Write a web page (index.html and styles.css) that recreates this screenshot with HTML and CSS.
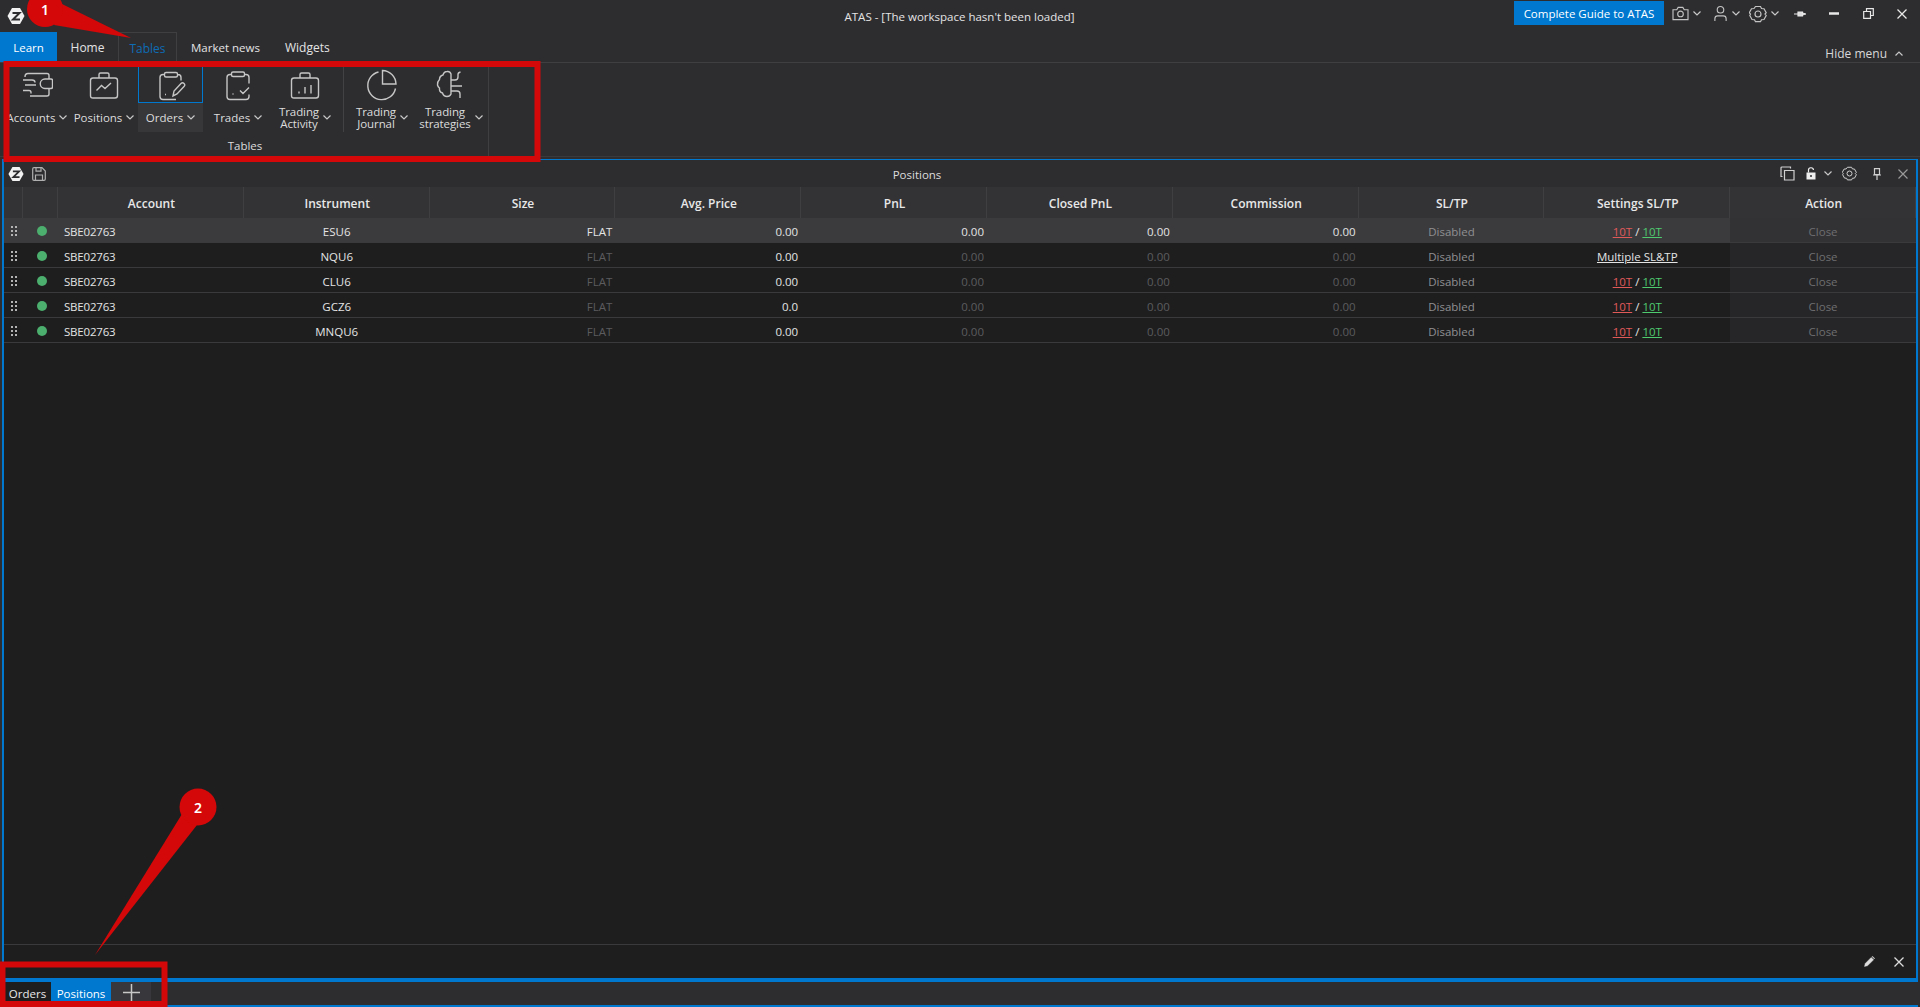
FILE: index.html
```html
<!DOCTYPE html>
<html lang="en">
<head>
  <meta charset="UTF-8" />
  <title>ATAS</title>
  <link rel="stylesheet" href="styles.css">
</head>
<body>
<div class="app">

  <!-- Title bar -->
  <div class="titlebar">
    <svg class="logo" viewBox="0 0 18 18"><path d="M5 1h8l4.500 8-4.500 8H5L.5 9z" fill="#f2f2f2"/><path d="M5.500 6h7L6 12.500h7" fill="none" stroke="#2d2d30" stroke-width="2"/></svg>
    <div class="app-title">ATAS - [The workspace hasn't been loaded]</div>
    <div class="guide-btn">Complete Guide to ATAS</div>
    <div class="sys-icons">
      <svg class="sys sys-camera" viewBox="0 0 18 16"><path d="M1 4h4l1.500-2.500h5L13 4h4v10.500H1z M6 8.500a3 3 0 1 0 6 0a3 3 0 1 0-6 0"/></svg>
      <svg class="chev chev-sys" viewBox="0 0 8 5"><path d="M.5.5 4 4 7.500.5"/></svg>
      <svg class="sys sys-user" viewBox="0 0 16 17"><path d="M4.500 4.500a3.500 3.500 0 1 0 7 0a3.500 3.500 0 1 0-7 0 M2 16.500v-2.500q0-3 3-3h6q3 0 3 3v2.500"/></svg>
      <svg class="chev chev-sys" viewBox="0 0 8 5"><path d="M.5.5 4 4 7.500.5"/></svg>
      <svg class="sys sys-gear" viewBox="0 0 18 18"><path d="M6.500 1.500h5l1 2 2.500.2 2.200 4-1.200 1.300 1.200 1.500-2.200 4-2.500.2-1 2h-5l-1-2-2.500-.2-2.200-4L1.500 9 .3 7.700l2.200-4 2.500-.2z M6 9a3 3 0 1 0 6 0a3 3 0 1 0-6 0"/></svg>
      <svg class="chev chev-sys" viewBox="0 0 8 5"><path d="M.5.5 4 4 7.500.5"/></svg>
      <svg class="win win-pin" viewBox="0 0 12 8"><path d="M0 4h4M4 2h4.500v4H4zM8.500 3l3.500 1-3.500 1" fill="#ddd"/></svg>
      <svg class="win win-min" viewBox="0 0 10 3"><path d="M0 1.500h10" stroke-width="2.500"/></svg>
      <svg class="win win-restore" viewBox="0 0 11 11"><path d="M.7 3.500h6.800v6.800H.7zM3.500 3.500V.7h6.800v6.800H7.500"/></svg>
      <svg class="win win-close" viewBox="0 0 10 10"><path d="M.5.5l9 9M9.500.5l-9 9" stroke-width="1.300"/></svg>
    </div>
  </div>

  <!-- Menu tabs -->
  <div class="menu">
    <div class="menu-tab menu-learn">Learn</div>
    <div class="menu-tab menu-home">Home</div>
    <div class="menu-tab menu-tables">Tables</div>
    <div class="menu-tab menu-news">Market news</div>
    <div class="menu-tab menu-widgets">Widgets</div>
    <div class="hide-menu">Hide menu
      <svg class="chev hide-chev" viewBox="0 0 8 5"><path d="M.5 4.500 4 1l3.500 3.500"/></svg>
    </div>
  </div>

  <!-- Ribbon -->
  <div class="ribbon">
    <div class="ribbon-group">
      <div class="ribbon-items">
        <div class="rb-item rb-accounts">
          <div class="rb-icon">
            <svg viewBox="0 0 32 32"><path d="M7 4.500h19q2 0 2 2v3.500M28 19.500v5.500q0 2-2 2H9M2 11h9q3 0 3 2.500M4 16h11M2 21.500h6q2 0 2 2v1M7 4.500q-3 0-3 3.500M24 10h6q1.500 0 1.500 1.500v6.500q0 1.500-1.500 1.500h-6a4.700 4.700 0 0 1 0-9.500z"/></svg>
          </div>
          <div class="rb-label"><span>Accounts</span><svg class="chev" viewBox="0 0 8 5"><path d="M.5.5 4 4 7.500.5"/></svg></div>
        </div>
        <div class="rb-item rb-positions">
          <div class="rb-icon">
            <svg viewBox="0 0 32 32"><path d="M5 9h22q2.500 0 2.500 2.500v15q0 2.500-2.500 2.500H5q-2.500 0-2.500-2.500v-15Q2.500 9 5 9zM11 9V5.500q0-1.500 1.500-1.500h7q1.500 0 1.500 1.500V9M8.500 21.500l5-5 3.500 3 6-5.500"/></svg>
          </div>
          <div class="rb-label"><span>Positions</span><svg class="chev" viewBox="0 0 8 5"><path d="M.5.5 4 4 7.500.5"/></svg></div>
        </div>
        <div class="rb-item rb-orders">
          <div class="rb-icon">
            <svg viewBox="0 0 32 32"><path d="M10 5.500H8Q5 5.500 5 8.500v19q0 3 3 3h13M22 5.500h1q3 0 3 3v3M11 3.500h10q1.500 0 1.500 1.500v1.500q0 1.500-1.500 1.500H11q-1.500 0-1.500-1.500V5q0-1.500 1.500-1.500zM10 25.500h1M18 27l1-5 7-7.500q1.500-1.500 3 0t0 3L22 25z"/></svg>
          </div>
          <div class="rb-label"><span>Orders</span><svg class="chev" viewBox="0 0 8 5"><path d="M.5.5 4 4 7.500.5"/></svg></div>
        </div>
        <div class="rb-item rb-trades">
          <div class="rb-icon">
            <svg viewBox="0 0 32 32"><path d="M9 5.500H8Q5 5.500 5 8.500v19q0 3 3 3h16q3 0 3-3v-2M23 5.500h1q3 0 3 3v6M11 3h10q1.500 0 1.500 1.500v1.500q0 1.500-1.500 1.500H11q-1.500 0-1.500-1.500V4.500Q9.500 3 11 3zM10.500 25h1M18 21.500l3 3 6-6"/></svg>
          </div>
          <div class="rb-label"><span>Trades</span><svg class="chev" viewBox="0 0 8 5"><path d="M.5.500 4 4 7.500.5"/></svg></div>
        </div>
        <div class="rb-item rb-activity">
          <div class="rb-icon">
            <svg viewBox="0 0 32 32"><path d="M5 9h22q2.500 0 2.500 2.500v15q0 2.500-2.500 2.500H5q-2.500 0-2.500-2.500v-15Q2.500 9 5 9zM11 9V5.500Q11 4 12.500 4h7Q21 4 21 5.500V9M10 22.500v2M16 18v6.500M22 16v8.500"/></svg>
          </div>
          <div class="rb-label rb-two"><span>Trading<br>Activity</span><svg class="chev" viewBox="0 0 8 5"><path d="M.5.5 4 4 7.500.5"/></svg></div>
        </div>
        <div class="rb-sep"></div>
        <div class="rb-item rb-journal">
          <div class="rb-icon">
            <svg viewBox="0 0 32 32"><path d="M12.500 3A14 14 0 1 0 29.500 19.500M16.500 1.500V15H30A14 14 0 0 0 16.500 1.500z"/></svg>
          </div>
          <div class="rb-label rb-two"><span>Trading<br>Journal</span><svg class="chev" viewBox="0 0 8 5"><path d="M.5.5 4 4 7.500.5"/></svg></div>
        </div>
        <div class="rb-item rb-strategies">
          <div class="rb-icon">
            <svg viewBox="0 0 32 32"><path d="M16 5q-1-3-4-2.500-3 0-4 3.500-3.500 1-3.500 4.500Q2 13 2.500 16q.5 2 2 3-.5 4 3 5 1 3.500 4.500 3.500 3 0 4-2.500zM16 11h4q3 0 3-3V5.500q0-2 2.500-2.500M16 17h11M16 22h6q3 0 3 3v4"/></svg>
          </div>
          <div class="rb-label rb-two"><span>Trading<br>strategies</span><svg class="chev" viewBox="0 0 8 5"><path d="M.5.5 4 4 7.500.5"/></svg></div>
        </div>
      </div>
      <div class="group-name">Tables</div>
    </div>
  </div>

  <!-- Positions panel -->
  <div class="panel">
    <div class="panel-bar">
      <svg class="logo logo-panel" viewBox="0 0 18 18"><path d="M5 1h8l4.500 8-4.500 8H5L.5 9z" fill="#f2f2f2"/><path d="M5.500 6h7L6 12.500h7" fill="none" stroke="#2d2d30" stroke-width="2"/></svg>
      <svg class="bar-save" viewBox="0 0 14 14"><path d="M2 .7h8l3.300 3.300v8q0 1.300-1.300 1.300H2Q.7 13.300.7 12V2Q.7.700 2 .7zM4 .7v3.500h5V.7M3.500 13.300V8h7v5.300"/></svg>
      <div class="panel-title">Positions</div>
      <div class="bar-icons">
        <svg class="bi bi-copy" viewBox="0 0 15 15"><path d="M4.500 4.500h9.500v9.500H4.500zM2.500 10.500H1V2q0-1 1-1h8.500v1.500"/></svg>
        <svg class="bi bi-lock" viewBox="0 0 10 13"><path d="M2.500 5.500V3.500a2.500 2.500 0 0 1 5-.5" fill="none"/><path d="M.5 5.500h9v7h-9z" fill="#eee" stroke="none"/><path d="M5 8v2" stroke="#2d2d30" stroke-width="1.500"/></svg>
        <svg class="chev bi-chev" viewBox="0 0 8 5"><path d="M.5.5 4 4 7.500.5"/></svg>
        <svg class="bi bi-gear" viewBox="0 0 18 18"><path d="M6.500 1.500h5l1 2 2.500.2 2.200 4-1.200 1.300 1.200 1.500-2.200 4-2.500.2-1 2h-5l-1-2-2.500-.2-2.200-4L1.500 9 .3 7.700l2.200-4 2.500-.2z M6 9a3 3 0 1 0 6 0a3 3 0 1 0-6 0"/></svg>
        <svg class="bi bi-pin" viewBox="0 0 8 12"><path d="M1.500.7h5v6h-5zM0 7h8M4 7v5"/></svg>
        <svg class="bi bi-close" viewBox="0 0 10 10"><path d="M.5.5l9 9M9.500.5l-9 9"/></svg>
      </div>
    </div>

    <div class="table">
      <div class="row head">
        <div class="cell"></div><div class="cell"></div>
        <div class="cell c">Account</div><div class="cell c">Instrument</div><div class="cell c">Size</div>
        <div class="cell c">Avg. Price</div><div class="cell c">PnL</div><div class="cell c">Closed PnL</div>
        <div class="cell c">Commission</div><div class="cell c">SL/TP</div><div class="cell c">Settings SL/TP</div><div class="cell c">Action</div>
      </div>

      <div class="row sel">
        <div class="cell grip"><i></i></div><div class="cell"><b class="status"></b></div>
        <div class="cell acct">SBE02763</div><div class="cell c">ESU6</div><div class="cell r">FLAT</div>
        <div class="cell r">0.00</div><div class="cell r">0.00</div><div class="cell r">0.00</div><div class="cell r">0.00</div>
        <div class="cell c mid">Disabled</div>
        <div class="cell c"><u class="sl">10T</u>&nbsp;/&nbsp;<u class="tp">10T</u></div>
        <div class="cell c action">Close</div>
      </div>
      <div class="row">
        <div class="cell grip"><i></i></div><div class="cell"><b class="status"></b></div>
        <div class="cell acct">SBE02763</div><div class="cell c">NQU6</div><div class="cell r dim">FLAT</div>
        <div class="cell r">0.00</div><div class="cell r dim">0.00</div><div class="cell r dim">0.00</div><div class="cell r dim">0.00</div>
        <div class="cell c mid">Disabled</div>
        <div class="cell c"><u>Multiple SL&amp;TP</u></div>
        <div class="cell c action">Close</div>
      </div>
      <div class="row">
        <div class="cell grip"><i></i></div><div class="cell"><b class="status"></b></div>
        <div class="cell acct">SBE02763</div><div class="cell c">CLU6</div><div class="cell r dim">FLAT</div>
        <div class="cell r">0.00</div><div class="cell r dim">0.00</div><div class="cell r dim">0.00</div><div class="cell r dim">0.00</div>
        <div class="cell c mid">Disabled</div>
        <div class="cell c"><u class="sl">10T</u>&nbsp;/&nbsp;<u class="tp">10T</u></div>
        <div class="cell c action">Close</div>
      </div>
      <div class="row">
        <div class="cell grip"><i></i></div><div class="cell"><b class="status"></b></div>
        <div class="cell acct">SBE02763</div><div class="cell c">GCZ6</div><div class="cell r dim">FLAT</div>
        <div class="cell r">0.0</div><div class="cell r dim">0.00</div><div class="cell r dim">0.00</div><div class="cell r dim">0.00</div>
        <div class="cell c mid">Disabled</div>
        <div class="cell c"><u class="sl">10T</u>&nbsp;/&nbsp;<u class="tp">10T</u></div>
        <div class="cell c action">Close</div>
      </div>
      <div class="row">
        <div class="cell grip"><i></i></div><div class="cell"><b class="status"></b></div>
        <div class="cell acct">SBE02763</div><div class="cell c">MNQU6</div><div class="cell r dim">FLAT</div>
        <div class="cell r">0.00</div><div class="cell r dim">0.00</div><div class="cell r dim">0.00</div><div class="cell r dim">0.00</div>
        <div class="cell c mid">Disabled</div>
        <div class="cell c"><u class="sl">10T</u>&nbsp;/&nbsp;<u class="tp">10T</u></div>
        <div class="cell c action">Close</div>
      </div>
    </div>

    <div class="panel-foot">
      <svg class="foot-icon" viewBox="0 0 12 12"><path d="M.5 11.500l.8-3.300 6.500-6.700 2.700 2.700-6.700 6.500z" fill="#ddd"/><path d="M8.700.7l.6-.4 2.400 2.400-.4.6z" fill="#ddd"/></svg>
      <svg class="foot-icon foot-close" viewBox="0 0 10 10"><path d="M.5.5l9 9M9.500.5l-9 9" stroke-width="1.300"/></svg>
    </div>
  </div>

  <!-- Workspace tabs -->
  <div class="tabbar">
    <div class="ws-tab">Orders</div>
    <div class="ws-tab ws-active">Positions</div>
    <div class="ws-add"><svg viewBox="0 0 17 17"><path d="M8.500 0v17M0 8.500h17" stroke-width="1.500"/></svg></div>
  </div>

</div>

<!-- Red annotations drawn over the screenshot -->
<svg class="marks" viewBox="0 0 1920 1007">
  <path class="mark-box" d="M6.500 64H537.500V159H6.500z"/>
  <path class="mark-box" d="M2.500 964.500H164.500V1004H2.500z"/>
  <path class="mark-fill" d="M62 4 131 38 54 25z"/>
  <circle class="mark-fill" cx="45" cy="9" r="18"/>
  <path class="mark-fill" d="M182 814 95 955 197 825z"/>
  <circle class="mark-fill" cx="198" cy="807" r="18.500"/>
  <text class="mark-num" x="45" y="15">1</text>
  <text class="mark-num" x="198" y="813">2</text>
</svg>
</body>
</html>
```

FILE: styles.css
```css
* {
  box-sizing: border-box;
}
html, body {
  margin: 0;
  height: 100%;
  overflow: hidden;
}
body {
  font-family: 'Open Sans', 'Noto Sans', sans-serif;
  font-size: 11.5px;
  color: #e4e4e4;
  background-color: #2d2d30;
}
svg {
  display: block;
  flex: none;
  fill: none;
  stroke: #d0d0d0;
  stroke-width: 1.2;
}
.app {
  height: 1007px;
  display: flex;
  flex-direction: column;
}

/* title bar */
.titlebar {
  height: 32px;
  display: flex;
  align-items: center;
  padding-left: 7px;
  position: relative;
}
.logo {
  width: 18px;
  height: 18px;
  stroke: none;
}
.app-title {
  flex: 1;
  text-align: center;
  padding-left: 380px;
  padding-top: 1px;
}
.guide-btn {
  width: 150px;
  height: 24px;
  margin-top: -6px;
  background-color: #0078cf;
  color: #fff;
  text-align: center;
  line-height: 25px;
  font-size: 11.5px;
}
.sys-icons {
  width: 256px;
  display: flex;
  align-items: center;
  margin-top: -5px;
  padding-left: 8px;
}
.sys {
  stroke: #c4c4c4;
}
.sys-camera {
  width: 17px;
  height: 15px;
}
.sys-user {
  width: 15px;
  height: 17px;
  margin-left: 12px;
}
.sys-gear {
  width: 18px;
  height: 18px;
  margin-left: 9px;
}
.chev {
  width: 8px;
  height: 5px;
  stroke: #c8c8c8;
  stroke-width: 1.2;
}
.chev-sys {
  margin-left: 4px;
}
.win {
  stroke: #e8e8e8;
}
.win-pin {
  width: 12px;
  height: 8px;
  margin-left: 15px;
}
.win-min {
  width: 10px;
  height: 3px;
  margin-left: 23px;
}
.win-restore {
  width: 11px;
  height: 11px;
  margin-left: 24px;
}
.win-close {
  width: 10px;
  height: 10px;
  margin-left: 23px;
}

/* menu tabs */
.menu {
  height: 31px;
  display: flex;
  border-bottom: 1px solid #3f3f42;
  position: relative;
}
.menu-tab {
  height: 30px;
  padding-top: 1px;
  line-height: 30px;
  font-size: 12px;
  text-align: center;
}
.menu-learn {
  width: 57px;
  background-color: #0078cf;
  color: #fff;
  font-size: 11.5px;
}
.menu-home {
  width: 61px;
}
.menu-tables {
  width: 59px;
  color: #0e6cb4;
  border: 1px solid #3f3f42;
  border-bottom: none;
}
.menu-news {
  width: 97px;
  font-size: 11.5px;
}
.menu-widgets {
  width: 44px;
  margin-left: 11px;
}
.hide-menu {
  margin-left: auto;
  display: flex;
  align-items: center;
  height: 30px;
  padding-top: 12px;
  padding-right: 17px;
  font-size: 12px;
  color: #d8d8d8;
}
.hide-chev {
  margin-left: 8px;
}

/* ribbon */
.ribbon {
  height: 94px;
  display: flex;
  padding-left: 4px;
  border-bottom: 1px solid #3a3a3d;
}
.ribbon-group {
  width: 485px;
  border-right: 1px solid #3f3f42;
  display: flex;
  flex-direction: column;
}
.ribbon-items {
  display: flex;
  height: 69px;
  padding-top: 4px;
}
.rb-item {
  display: flex;
  flex-direction: column;
  align-items: center;
}
.rb-accounts { width: 66px; }
.rb-positions { width: 68px; }
.rb-orders { width: 65px; }
.rb-trades { width: 67px; padding-left: 3px; }
.rb-activity { width: 73px; padding-right: 3px; }
.rb-journal { width: 71px; padding-left: 5px; }
.rb-strategies { width: 72px; }
.rb-icon {
  width: 100%;
  height: 36px;
  display: flex;
  align-items: center;
  justify-content: center;
}
.rb-icon svg {
  width: 32px;
  height: 32px;
  stroke: #c6c6c6;
  stroke-width: 1.4;
}
.rb-label {
  width: 100%;
  height: 29px;
  display: flex;
  align-items: center;
  justify-content: center;
  gap: 4px;
  color: #dcdcdc;
  white-space: nowrap;
}
.rb-two span {
  line-height: 12px;
  text-align: center;
  letter-spacing: -0.1px;
}
.rb-orders .rb-icon {
  border: 1px solid #0078cf;
  border-top: none;
}
.rb-orders .rb-label {
  background-color: #37373a;
}
.rb-sep {
  width: 1px;
  height: 65px;
  background-color: #424245;
}
.group-name {
  text-align: center;
  padding-top: 6px;
  padding-right: 2px;
  color: #dcdcdc;
}

/* panel */
.panel {
  margin: 2px 2px 0;
  flex: 1;
  display: flex;
  flex-direction: column;
  border: 2px solid #0078cf;
  border-top-width: 1px;
  border-bottom-width: 4px;
  background-color: #1e1e1f;
  min-height: 0;
}
.panel-bar {
  height: 27px;
  flex: none;
  display: flex;
  align-items: center;
  background-color: #2d2d30;
  padding-left: 4px;
  position: relative;
}
.logo-panel {
  width: 16px;
  height: 16px;
}
.bar-save {
  width: 14px;
  height: 14px;
  margin-left: 8px;
  stroke: #b0b0b0;
}
.panel-title {
  flex: 1;
  text-align: center;
  padding-left: 8px;
  padding-top: 1px;
  color: #dcdcdc;
}
.bar-icons {
  display: flex;
  align-items: center;
  padding-right: 8px;
}
.bi {
  stroke: #d0d0d0;
}
.bi-copy { width: 15px; height: 15px; }
.bi-lock { width: 10px; height: 13px; margin-left: 11px; stroke: #eee; }
.bi-chev { margin-left: 8px; }
.bi-gear { width: 15px; height: 15px; margin-left: 10px; }
.bi-pin { width: 8px; height: 12px; margin-left: 16px; }
.bi-close { width: 10px; height: 10px; margin-left: 17px; stroke: #999; }

.table {
  flex: 1;
}
.row {
  display: grid;
  grid-template-columns: 19px 35px repeat(10, 1fr);
  height: 25px;
  border-bottom: 1px solid #3a3a3d;
}
.row.head {
  height: 31px;
  background-color: #333336;
  border-bottom: none;
  font-weight: 600;
  font-size: 12px;
  color: #e8e8e8;
}
.row.head .cell {
  border-right: 1px solid #3f3f42;
  padding-top: 1px;
  padding-bottom: 0;
}
.row.head .cell.c {
  padding-left: 5px;
}
.row.sel {
  background-color: #3b3b3e;
}
.cell {
  display: flex;
  align-items: center;
  padding: 2px 3px 0 6px;
  white-space: nowrap;
  min-width: 0;
}
.cell.c {
  justify-content: center;
  padding-left: 3px;
}
.cell.r {
  justify-content: flex-end;
}
.acct {
  letter-spacing: -0.2px;
}
.dim {
  color: #5c5c5e;
}
.mid {
  color: #909092;
}
.action {
  color: #6e6e70;
  background-color: #262628;
}
.sel .action {
  background-color: #323235;
}
.sl {
  color: #e05a5a;
}
.tp {
  color: #4fcb6f;
}
.grip {
  padding: 1px 0 0 6px;
}
.grip i {
  display: block;
  width: 8px;
  height: 12px;
  background-image: radial-gradient(circle, #b4b4b4 1px, transparent 1.2px);
  background-size: 4px 4px;
}
.status {
  display: block;
  width: 10px;
  height: 10px;
  margin-left: 8px;
  margin-top: -1px;
  border-radius: 50%;
  background-color: #4caf6e;
}
.panel-foot {
  height: 34px;
  flex: none;
  border-top: 1px solid #3a3a3d;
  display: flex;
  align-items: center;
  justify-content: flex-end;
  padding-right: 12px;
}
.foot-icon {
  width: 11px;
  height: 11px;
  stroke: #ddd;
  stroke-width: 0.4;
}
.foot-close {
  margin-left: 19px;
  width: 10px;
  height: 10px;
  stroke-width: 1.3;
}

/* workspace tabs */
.tabbar {
  height: 25px;
  flex: none;
  display: flex;
  padding-left: 2px;
  border-bottom: 2px solid #0078cf;
  margin-left: 2px;
  margin-right: 2px;
  color: #e8e8e8;
}
.ws-tab {
  width: 47px;
  text-align: center;
  line-height: 23px;
  font-size: 11.5px;
  background-color: #1e1e1f;
}
.ws-active {
  width: 60px;
  background-color: #0078cf;
  color: #fff;
}
.ws-add {
  width: 40px;
  height: 21px;
  background-color: #38383c;
  display: flex;
  align-items: center;
  justify-content: center;
}
.ws-add svg {
  width: 17px;
  height: 17px;
  stroke: #c8c8c8;
}

/* red annotations */
.marks {
  position: absolute;
  left: 0;
  top: 0;
  width: 1920px;
  height: 1007px;
  stroke: none;
  pointer-events: none;
}
.mark-box {
  fill: none;
  stroke: #d40808;
  stroke-width: 6;
}
.mark-fill {
  fill: #d40808;
}
.mark-num {
  fill: #fff;
  font-family: 'Noto Sans', sans-serif;
  font-size: 14px;
  font-weight: 600;
  text-anchor: middle;
}
```
